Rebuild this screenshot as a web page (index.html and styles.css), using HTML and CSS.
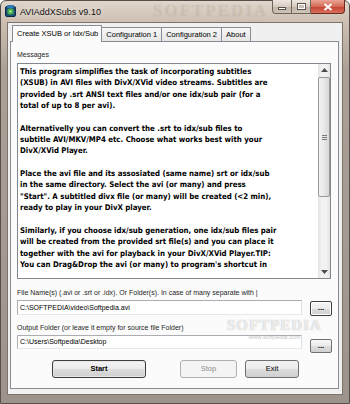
FILE: index.html
```html
<!DOCTYPE html>
<html lang="en">
<head>
    <meta charset="UTF-8">
    <title>AVIAddXSubs v9.10</title>
    <link rel="stylesheet" href="styles.css">
</head>
<body>
<div class="window">
  <div class="titlebar">
    <svg class="app-icon" width="11" height="12" viewBox="0 0 11 12">
      <rect x="0.5" y="1.5" width="10" height="10" rx="1.5" fill="#1d4f7a" stroke="#0d2a44"/>
      <circle cx="5.5" cy="6.5" r="3.2" fill="#3fae49"/>
      <rect x="2" y="0" width="7" height="3" rx="1" fill="#2f78b8"/>
      <circle cx="5.5" cy="6.5" r="1.1" fill="#e7f0c0"/>
    </svg>
    <span class="title">AVIAddXSubs v9.10</span>
    <div class="caption-btns">
      <span class="cap cap-min"><i></i></span>
      <span class="cap cap-max"><i></i></span>
      <span class="cap cap-close">
        <svg width="10" height="8" viewBox="0 0 10 8"><path d="M1.5 1 L8.5 7 M8.5 1 L1.5 7" stroke="#fff" stroke-width="2"/></svg>
      </span>
    </div>
  </div>

  <div class="client">
    <div class="tabs">
      <div class="tab active">Create XSUB or Idx/Sub</div>
      <div class="tab">Configuration 1</div>
      <div class="tab">Configuration 2</div>
      <div class="tab">About</div>
    </div>

    <div class="panel">
      <div class="label msg-label">Messages</div>
      <div class="msgbox">
        <div class="msgtext">
          This program simplifies the task of incorporating subtitles<br>
          (XSUB) in AVI files with DivX/XVid video streams. Subtitles are<br>
          provided by .srt ANSI text files and/or one idx/sub pair (for a<br>
          total of up to 8 per avi).<br>
          <br>
          Alternativelly you can convert the .srt to idx/sub files to<br>
          subtitle AVI/MKV/MP4 etc. Choose what works best with your<br>
          DivX/XVid Player.<br>
          <br>
          Place the avi file and its assosiated (same name) srt or idx/sub<br>
          in the same directory. Select the avi (or many) and press<br>
          "Start". A subtitled divx file (or many) will be created (&lt;2 min),<br>
          ready to play in your DivX player.<br>
          <br>
          Similarly, if you choose idx/sub generation, one idx/sub files pair<br>
          will be created from the provided srt file(s) and you can place it<br>
          together with the avi for playback in your DivX/XVid Player.TIP:<br>
          You can Drag&amp;Drop the avi (or many) to program's shortcut in
        </div>
        <div class="vscroll">
          <div class="sb-arrow">
            <svg width="7" height="4" viewBox="0 0 7 4"><path d="M0 4 L3.5 0 L7 4 Z" fill="#4d4d4d"/></svg>
          </div>
          <div class="sb-thumb"><i></i><i></i><i></i></div>
          <div class="sb-track"></div>
          <div class="sb-arrow">
            <svg width="7" height="4" viewBox="0 0 7 4"><path d="M0 0 L3.5 4 L7 0 Z" fill="#4d4d4d"/></svg>
          </div>
        </div>
      </div>

      <div class="label file-label">File Name(s) (.avi or .srt or .idx). Or Folder(s). In case of many separate with |</div>
      <div class="field-row">
        <div class="input">C:\SOFTPEDIA\video\Softpedia.avi</div>
        <div class="dots focus">...</div>
      </div>

      <div class="label out-label">Output Folder (or leave it empty for source file Folder)</div>
      <div class="field-row second">
        <div class="input">C:\Users\Softpedia\Desktop</div>
        <div class="dots">...</div>
      </div>

      <div class="actions">
        <div class="btn btn-start">Start</div>
        <div class="btn btn-stop">Stop</div>
        <div class="btn btn-exit">Exit</div>
      </div>
    </div>
  </div>

  <div class="wm-title">SOFTPEDIA</div>
  <div class="wm-body">SOFTPEDIA<span>www.softpedia.com</span></div>
</div>
</body>
</html>
```

FILE: styles.css
```css
* {
    box-sizing: border-box;
}

body {
    margin: 0;
    width: 350px;
    height: 404px;
    overflow: hidden;
    background: #ffffff;
    font-family: "Liberation Sans", Arial, sans-serif;
    font-size: 7px;
    color: #000;
}

/* window frame */
.window {
    position: relative;
    width: 350px;
    height: 404px;
    display: flex;
    flex-direction: column;
    padding: 0 6px 8px 6px;
    border: 1px solid #57504a;
    border-radius: 6px 6px 0 0;
    background: linear-gradient(to bottom, #e0d6cc 0, #cdbfb1 21px, #aaa096 70px, #9c948c 100%);
}

.titlebar {
    height: 21px;
    margin: 0 -6px;
    padding: 0 4px;
    display: flex;
    align-items: center;
}

.app-icon {
    flex: none;
    margin-top: -1px;
}

.title {
    margin-left: 4px;
    font-size: 9px;
    color: #111;
    text-shadow: 0 0 6px rgba(255, 255, 255, 0.9);
}

.caption-btns {
    margin-left: auto;
    align-self: flex-start;
    display: flex;
    margin-top: -1px;
}

.cap {
    height: 14px;
    display: flex;
    align-items: center;
    justify-content: center;
    border: 1px solid #6e655d;
    border-top: none;
    background: linear-gradient(to bottom, #eee7e0 0, #d7ccc1 50%, #c2b4a7 51%, #cfc3b7 100%);
}

.cap-min {
    width: 20px;
    border-radius: 0 0 0 4px;
}

.cap-min i {
    width: 8px;
    height: 3px;
    margin-top: 4px;
    background: #fff;
    border: 1px solid #5a534d;
}

.cap-max {
    width: 19px;
    border-left: none;
}

.cap-max i {
    width: 9px;
    height: 7px;
    border: 1px solid #5a534d;
    box-shadow: inset 0 0 0 1px #fff;
    background: #cbbfb3;
}

.cap-close {
    width: 34px;
    border-left: none;
    border-color: #6b2a22;
    border-radius: 0 0 4px 0;
    background: linear-gradient(to bottom, #e9a594 0, #d46a58 50%, #c2402f 51%, #d9705c 100%);
}

/* client area */
.client {
    flex: 1;
    display: flex;
    flex-direction: column;
    padding: 0 3px 5px 2px;
    background: #f0f0f0;
    border: 1px solid #7d736a;
}

.tabs {
    height: 18px;
    display: flex;
    align-items: flex-end;
    padding-left: 2px;
}

.tab {
    height: 14px;
    padding: 0 4px;
    line-height: 13px;
    font-size: 7.5px;
    color: #000;
    border: 1px solid #898c95;
    border-bottom: none;
    border-left: none;
    background: linear-gradient(to bottom, #f6f6f6, #e6e6e6);
    white-space: nowrap;
}

.tab.active {
    position: relative;
    z-index: 1;
    height: 17px;
    margin-bottom: -1px;
    padding: 0 3px 0 4px;
    line-height: 15px;
    border-left: 1px solid #898c95;
    background: #fbfbfb;
}

.panel {
    flex: 1;
    padding: 0 7px 0 6px;
    background: #fbfbfb;
    border: 1px solid #898c95;
}

.label {
    height: 10px;
    line-height: 10px;
    color: #1e1e1e;
    white-space: nowrap;
}

.msg-label {
    margin-top: 8px;
}

/* message box */
.msgbox {
    margin-top: 3px;
    height: 216px;
    display: flex;
    background: #fff;
    border: 1px solid #828790;
}

.msgtext {
    flex: 1;
    padding: 2px 0 0 2px;
    font-family: "DejaVu Sans Condensed", "DejaVu Sans", sans-serif;
    font-stretch: condensed;
    font-weight: bold;
    font-size: 7.8px;
    line-height: 11.35px;
    white-space: nowrap;
    overflow: hidden;
}

.vscroll {
    width: 12px;
    display: flex;
    flex-direction: column;
    background: linear-gradient(to right, #e3e3e3, #f2f2f2 30%, #f2f2f2 70%, #e3e3e3);
}

.sb-arrow {
    height: 12px;
    display: flex;
    align-items: center;
    justify-content: center;
}

.sb-thumb {
    height: 120px;
    margin: 1px 0 0 0;
    display: flex;
    flex-direction: column;
    align-items: center;
    justify-content: center;
    gap: 1px;
    border: 1px solid #989898;
    border-radius: 2px;
    background: linear-gradient(to right, #f4f4f4, #e8e8e8 50%, #d8d8d8);
}

.sb-thumb i {
    width: 5px;
    height: 1px;
    background: #7c7c7c;
}

.sb-track {
    flex: 1;
}

/* file fields */
.file-label {
    margin-top: 9px;
}

.field-row {
    margin-top: 2px;
    display: grid;
    grid-template-columns: 285px 22px;
    column-gap: 8px;
    align-items: start;
}

.input {
    height: 15px;
    padding-left: 2px;
    line-height: 13px;
    background: #fff;
    border: 1px solid #abadb3;
    border-right-color: #dbdfe6;
    border-bottom-color: #e3e9ef;
    white-space: nowrap;
}

.dots {
    height: 15px;
    margin-top: 1px;
    text-align: center;
    line-height: 11px;
    font-weight: bold;
    font-size: 8px;
    border: 1px solid #707070;
    border-radius: 2px;
    background: linear-gradient(to bottom, #f6f6f6 0, #ebebeb 50%, #dddddd 51%, #d1d1d1 100%);
}

.dots.focus {
    border-color: #3c3c3c;
    box-shadow: inset 0 0 0 1px #fff;
}

.out-label {
    margin-top: 7px;
}

.field-row.second .input {
    height: 14px;
    line-height: 12px;
}

.field-row.second .dots {
    margin-top: 4px;
    height: 14px;
}

/* bottom buttons */
.actions {
    margin-top: 7px;
    display: flex;
}

.btn {
    height: 18px;
    line-height: 16px;
    text-align: center;
    font-size: 7.5px;
    border: 1px solid #707070;
    border-radius: 3px;
    background: linear-gradient(to bottom, #f2f2f2 0, #ebebeb 50%, #dddddd 51%, #cfcfcf 100%);
}

.btn-start {
    width: 94px;
    margin-left: 35px;
    font-weight: bold;
    border-color: #3d3d3d;
    box-shadow: inset 0 0 0 1px #e8e8e8;
}

.btn-stop {
    width: 57px;
    margin-left: 34px;
    color: #8d8d8d;
    border-color: #adb2b5;
    background: #f4f4f4;
}

.btn-exit {
    width: 54px;
    margin-left: 8px;
}

/* softpedia watermarks */
.wm-title {
    position: absolute;
    left: 152px;
    top: 1px;
    font-family: "Liberation Serif", serif;
    font-weight: bold;
    font-size: 17px;
    line-height: 18px;
    letter-spacing: 2px;
    color: rgba(255, 255, 255, 0.18);
    text-shadow: 0 0 1px rgba(120, 100, 80, 0.25);
}

.wm-body {
    position: absolute;
    left: 226px;
    top: 316px;
    display: flex;
    flex-direction: column;
    align-items: center;
    font-family: "Liberation Serif", serif;
    font-weight: bold;
    font-size: 15px;
    letter-spacing: 1px;
    color: rgba(255, 255, 255, 0.75);
    text-shadow: 0 0 1px rgba(90, 90, 90, 0.5);
}

.wm-body span {
    font-family: "Liberation Sans", sans-serif;
    font-weight: normal;
    font-size: 6px;
    letter-spacing: 0;
    color: rgba(150, 150, 150, 0.6);
    text-shadow: none;
}
```
